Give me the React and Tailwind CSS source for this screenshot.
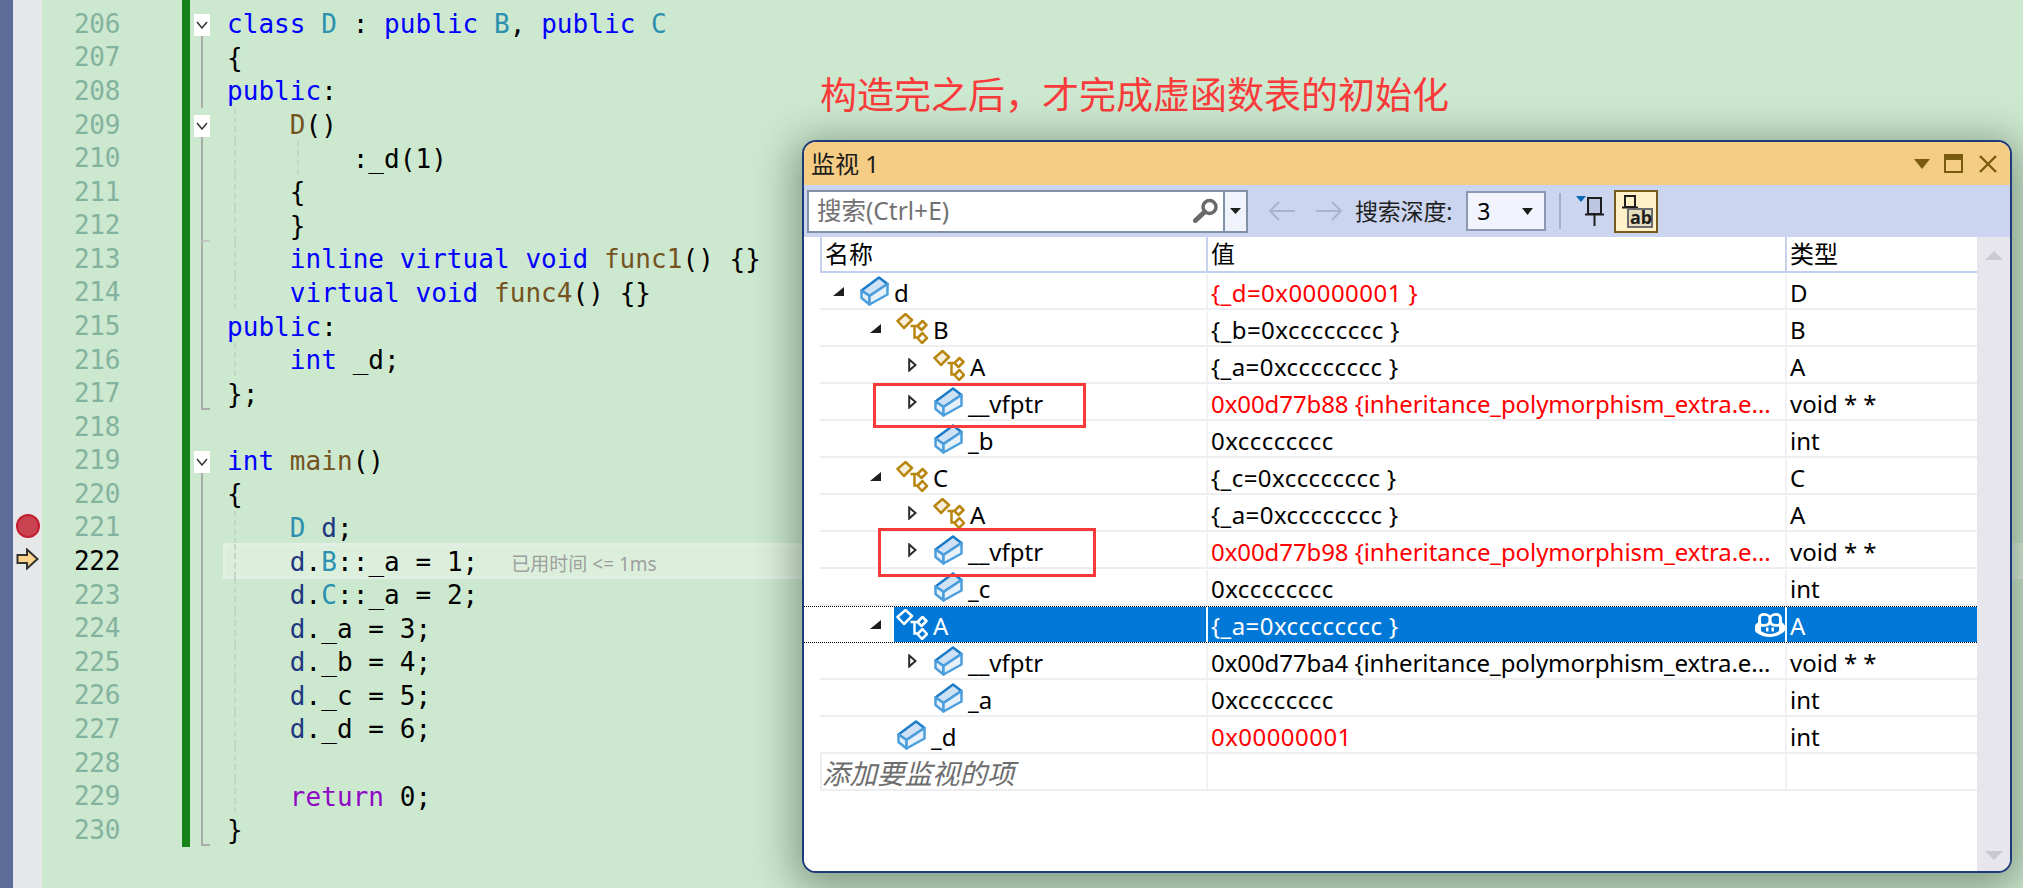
const sans = "font-['Noto_Sans','Noto_Sans_CJK_SC',sans-serif]";

// editor source, one entry per line: [text, colour] pieces
const K = "text-[#0000ff]";
const T = "text-[#2b91af]";
const F = "text-[#74531f]";
const V = "text-[#1f377f]";
const P = "text-[#8f08c4]";
const N = "text-black";

const code = [
  { n: 206, fold: "box", parts: [["class ", K], ["D", T], [" : ", N], ["public ", K], ["B", T], [", ", N], ["public ", K], ["C", T]] },
  { n: 207, fold: "line", parts: [["{", N]] },
  { n: 208, fold: "line", parts: [["public", K], [":", N]] },
  { n: 209, fold: "box", guide: true, parts: [["    ", N], ["D", F], ["()", N]] },
  { n: 210, fold: "line", guide: true, guide2: true, parts: [["        :", N], ["_d", N], ["(1)", N]] },
  { n: 211, fold: "line", guide: true, parts: [["    {", N]] },
  { n: 212, fold: "end", guide: true, parts: [["    }", N]] },
  { n: 213, fold: "line", guide: true, parts: [["    ", N], ["inline virtual void ", K], ["func1", F], ["() {}", N]] },
  { n: 214, fold: "line", guide: true, parts: [["    ", N], ["virtual void ", K], ["func4", F], ["() {}", N]] },
  { n: 215, fold: "line", parts: [["public", K], [":", N]] },
  { n: 216, fold: "line", guide: true, parts: [["    ", N], ["int ", K], ["_d;", N]] },
  { n: 217, fold: "last", parts: [["};", N]] },
  { n: 218, parts: [] },
  { n: 219, fold: "box", parts: [["int ", K], ["main", F], ["()", N]] },
  { n: 220, fold: "line", parts: [["{", N]] },
  { n: 221, fold: "line", guide: true, parts: [["    ", N], ["D ", T], ["d", V], [";", N]] },
  { n: 222, fold: "line", guide: true, current: true, parts: [["    ", N], ["d", V], [".", N], ["B", T], ["::_a = 1;", N]] },
  { n: 223, fold: "line", guide: true, parts: [["    ", N], ["d", V], [".", N], ["C", T], ["::_a = 2;", N]] },
  { n: 224, fold: "line", guide: true, parts: [["    ", N], ["d", V], ["._a = 3;", N]] },
  { n: 225, fold: "line", guide: true, parts: [["    ", N], ["d", V], ["._b = 4;", N]] },
  { n: 226, fold: "line", guide: true, parts: [["    ", N], ["d", V], ["._c = 5;", N]] },
  { n: 227, fold: "line", guide: true, parts: [["    ", N], ["d", V], ["._d = 6;", N]] },
  { n: 228, fold: "line", guide: true, parts: [] },
  { n: 229, fold: "line", guide: true, parts: [["    ", N], ["return ", P], ["0;", N]] },
  { n: 230, fold: "last", parts: [["}", N]] },
];

// watch window rows
const watch = [
  { level: 0, arrow: "open", icon: "cube", name: "d", value: "{_d=0x00000001 }", red: true, type: "D" },
  { level: 1, arrow: "open", icon: "class", name: "B", value: "{_b=0xcccccccc }", type: "B" },
  { level: 2, arrow: "closed", icon: "class", name: "A", value: "{_a=0xcccccccc }", type: "A" },
  { level: 2, arrow: "closed", icon: "cube", name: "__vfptr", value: "0x00d77b88 {inheritance_polymorphism_extra.e...", long: true, red: true, type: "void * *" },
  { level: 2, icon: "cube", name: "_b", value: "0xcccccccc", type: "int" },
  { level: 1, arrow: "open", icon: "class", name: "C", value: "{_c=0xcccccccc }", type: "C" },
  { level: 2, arrow: "closed", icon: "class", name: "A", value: "{_a=0xcccccccc }", type: "A" },
  { level: 2, arrow: "closed", icon: "cube", name: "__vfptr", value: "0x00d77b98 {inheritance_polymorphism_extra.e...", long: true, red: true, type: "void * *" },
  { level: 2, icon: "cube", name: "_c", value: "0xcccccccc", type: "int" },
  { level: 1, arrow: "open", icon: "class", name: "A", value: "{_a=0xcccccccc }", type: "A", selected: true },
  { level: 2, arrow: "closed", icon: "cube", name: "__vfptr", value: "0x00d77ba4 {inheritance_polymorphism_extra.e...", long: true, type: "void * *" },
  { level: 2, icon: "cube", name: "_a", value: "0xcccccccc", type: "int" },
  { level: 1, icon: "cube", name: "_d", value: "0x00000001", red: true, type: "int" },
];

const levelPad = ["pl-[13px]", "pl-[50px]", "pl-[87px]"];

const CubeIcon = () => (
  <svg width="29" height="30" viewBox="0 0 29 30" className="shrink-0">
    <path d="M1.500 14.500 19 1.500l8.500 6.500L9.500 20z" fill="#cfe2f5" stroke="#1a7cc9" strokeWidth="2.500" strokeLinejoin="round" />
    <path d="M1.500 14.500 9.500 20v8.500l-8-6.500z" fill="#e6f1fa" stroke="#4c9fdc" strokeWidth="2.500" strokeLinejoin="round" />
    <path d="M9.500 20 27.500 8v10.500l-18 10z" fill="#e6f1fa" stroke="#4c9fdc" strokeWidth="2.500" strokeLinejoin="round" />
  </svg>
);

const ClassIcon = ({ selected }) => {
  const stroke = selected ? "#ffffff" : "#b9860f";
  const fill = selected ? "#0078d7" : "#f6efdc";
  return (
    <svg width="32" height="31" viewBox="0 0 31 31" fill="none" className="shrink-0 -ml-[1px]">
      <path d="M14 13H21M18 13V24.5H21" stroke={stroke} strokeWidth="2.500" />
      <path d="M1 8 9 1l6.500 6-8 8z" fill={fill} stroke={stroke} strokeWidth="2.500" strokeLinejoin="round" />
      <path d="M21 13l5-5 4 4-5 5z" fill={selected ? fill : "#fff"} stroke={stroke} strokeWidth="2.500" strokeLinejoin="round" />
      <path d="M21 25l5-5 4.500 5-5 5z" fill={selected ? fill : "#fff"} stroke={stroke} strokeWidth="2.500" strokeLinejoin="round" />
    </svg>
  );
};

const Arrow = ({ kind }) => {
  if (kind === "open")
    return (
      <svg width="11" height="9" viewBox="0 0 11 9">
        <path d="M0 9 11 0V9z" fill="#1e1e1e" />
      </svg>
    );
  if (kind === "closed")
    return (
      <svg width="9" height="14" viewBox="0 0 9 14" className="ml-[1px]">
        <path d="M1.200 1.500 7.500 7 1.200 12.500z" fill="#fff" stroke="#2b2b2b" strokeWidth="2" />
      </svg>
    );
  return null;
};

const CopilotIcon = () => (
  <svg width="30" height="26" viewBox="0 0 30 26" className="shrink-0">
    <path fillRule="evenodd" fill="#fff" d="M9 1c2.6 0 4.7.9 6 2.6C16.300 1.900 18.400 1 21 1c4 0 6 2.200 6 6v3.500c1.600.9 3 2.200 3 4v3c0 1.300-.8 2.200-2 3-3.500 2.800-8.200 4.500-13 4.500S5.500 23.800 2 21c-1.200-.8-2-1.700-2-3v-3.500c0-1.800 1.400-3.100 3-4V7c0-3.800 2-6 6-6zM6 6v4.500c0 1 .8 1.500 3 1.500 3 0 4.500-1 4.500-3.500V6.500C13.500 4.800 12 3.800 9.500 3.800 7 3.800 6 4.500 6 6zm18 0c0-1.500-1-2.200-3.500-2.200-2.500 0-4 1-4 2.700v2C16.500 11 18 12 21 12c2.200 0 3-.5 3-1.500zM15 12.500c-1 1.300-3 2.300-6 2.300-1 0-2-.1-3-.4V19c2.700 1.800 6 3 9 3s6.300-1.200 9-3v-4.600c-1 .3-2 .4-3 .4-3 0-5-1-6-2.300z" />
    <path fill="#fff" d="M11 15.500h2.500v4H11zM16.500 15.500H19v4h-2.500z" />
  </svg>
);

const WatchRow = ({ row }) => {
  const rowBg = row.selected
    ? "pl-[16px] text-white border-y border-dotted border-y-black"
    : "ml-[16px] pt-[1px] border-b-2 border-[#eeeef1]";
  return (
    <div className={`h-[37px] flex items-center text-[24px] ${rowBg}`}>
      <div className={`w-[386px] h-full flex items-center relative ${levelPad[row.level]}`}>
        {row.selected && <div className="absolute left-[74px] right-0 inset-y-0 bg-[#0078d7]" />}
        <div className="w-[27px] h-4 flex items-center relative">
          <Arrow kind={row.arrow} />
        </div>
        <div className="relative flex items-center gap-[5px]">
          {row.icon === "cube" ? <CubeIcon /> : <ClassIcon selected={row.selected} />}
          <span className={`pt-[3px] ${row.selected ? "text-white" : "text-black"}`}>{row.name}</span>
        </div>
      </div>
      <div className={`w-[579px] h-full flex items-center justify-between pl-[3px] border-l-2 whitespace-nowrap ${row.selected ? "bg-[#0078d7] border-[#f3f8fd]" : "border-[#f2f2f4]"} ${row.red ? "text-[#ff0000]" : row.selected ? "text-white" : "text-black"}`}>
        <span className={`pt-[3px] ${row.long ? "tracking-[-0.08px]" : "tracking-[0.45px]"}`}>{row.value}</span>
        {row.selected && <CopilotIcon />}
      </div>
      <div className={`flex-1 h-full flex items-center pl-[3px] border-l-2 ${row.selected ? "bg-[#0078d7] border-[#f3f8fd] text-white" : "border-[#f2f2f4] text-black"}`}>
        <span className="pt-[3px]">{row.type}</span>
      </div>
    </div>
  );
};

const FoldCell = ({ kind }) => {
  if (kind === "box")
    return (
      <div className="h-[33.58px] relative">
        <div className="absolute left-[4px] top-[7px] w-4 h-[22px] bg-white flex items-center justify-center">
          <svg width="12" height="8" viewBox="0 0 12 8" fill="none">
            <path d="M1 1l5 6 5-6" stroke="#333" strokeWidth="1.500" />
          </svg>
        </div>
        <div className="absolute left-[11px] top-[29px] bottom-0 w-[2px] bg-[#a9aca9]" />
      </div>
    );
  if (kind === "line") return <div className="h-[33.58px] ml-[11px] w-[2px] bg-[#a9aca9]" />;
  if (kind === "end")
    return <div className="h-[33.58px] ml-[11px] w-[9px] border-l-2 border-b-2 border-[#a9aca9] [border-bottom-color:#c4c8c4]" />;
  if (kind === "last") return <div className="h-[33.58px] ml-[11px] w-[9px] border-l-2 border-b-2 border-[#a9aca9]" />;
  return <div className="h-[33.58px]" />;
};

const CodeLine = ({ line }) => (
  <div className="h-[33.58px] relative flex items-center pl-[4px] whitespace-pre">
    {line.current && (
      <div className="absolute left-0 right-0 -top-px -bottom-px bg-[#dcefdd] border-y-[3px] border-l-[3px] border-[#e3efe5]" />
    )}
    {line.guide && <div className="absolute left-[11px] inset-y-0 border-l-2 border-dashed border-[#c2d8c6]" />}
    {line.guide2 && <div className="absolute left-[74px] inset-y-0 border-l-2 border-dashed border-[#c2d8c6]" />}
    <span className="relative top-[1px] tracking-[0.05px]">
      {line.parts.map(([text, color], i) => (
        <span key={i} className={color}>{text}</span>
      ))}
    </span>
    {line.current && (
      <span className={`relative top-[3px] ml-[33px] text-[19px] text-[#9c9f9c] ${sans}`}>已用时间 &lt;= 1ms</span>
    )}
  </div>
);

const App = () => (
  <div className="w-[2023px] h-[888px] relative overflow-hidden flex bg-[#cce8cf] font-['DejaVu_Sans_Mono',monospace] text-[26px]">
    <div className="w-[13px] bg-[#5d6b99]" />

    {/* glyph margin */}
    <div className="w-[29px] bg-[#e6e7e8] pt-[7px]">
      {code.map((line) => (
        <div key={line.n} className="h-[33.58px] flex items-center justify-center">
          {line.n === 221 && <div className="w-6 h-6 rounded-full bg-[#c8434f] border-2 border-[#c41c30] shrink-0 -translate-y-[1px]" />}
          {line.n === 222 && (
            <svg width="23" height="22" viewBox="0 0 23 22" className="shrink-0 -translate-y-[2px]">
              <path d="M1.500 7H11V1.500L21.500 11 11 20.500V15H1.500z" fill="#fbd38a" stroke="#333" strokeWidth="2" />
            </svg>
          )}
        </div>
      ))}
    </div>

    {/* line numbers */}
    <div className="w-[140px] pl-[32px] pt-[7px]">
      {code.map((line) => (
        <div key={line.n} className={`h-[33.58px] flex items-center tracking-[-0.3px] pt-[1px] ${line.current ? "text-black" : "text-[#83b39e]"}`}>
          {line.n}
        </div>
      ))}
    </div>

    {/* changed-lines bar */}
    <div className="w-2 h-[847px] bg-[#178217]" />

    <div className="w-[33px] pt-[7px]">
      {code.map((line) => (
        <FoldCell key={line.n} kind={line.fold} />
      ))}
    </div>

    <div className="flex-1 pt-[7px]">
      {code.map((line) => (
        <CodeLine key={line.n} line={line} />
      ))}
    </div>

    {/* annotation pasted over the editor */}
    <div className="absolute left-[820px] top-[71px] text-[37px] leading-[44px] text-[#f93b3b] font-['Noto_Sans_CJK_SC',sans-serif]">
      构造完之后，才完成虚函数表的初始化
    </div>

    {/* floating watch window */}
    <div className={`absolute left-[802px] top-[140px] w-[1210px] h-[733px] rounded-[14px] border-2 border-[#1f3a7a] bg-white overflow-hidden flex flex-col shadow-[0_8px_40px_8px_rgba(30,50,30,0.42)] ${sans}`}>
      <div className="h-[43px] shrink-0 bg-[#f4cc84] flex items-center pl-[7px] pr-[12px] text-[24px] text-[#1c1c1c]">
        <span className="flex-1">监视 1</span>
        <svg width="16" height="10" viewBox="0 0 16 10" className="mr-[14px]">
          <path d="M0 0h16L8 10z" fill="#7a5a10" />
        </svg>
        <div className="w-[19px] h-[19px] border-2 border-t-[6px] border-[#7a5a10] mr-[15px]" />
        <svg width="20" height="20" viewBox="0 0 20 20" fill="none">
          <path d="M2 2l16 16M18 2 2 18" stroke="#7a5a10" strokeWidth="2.400" />
        </svg>
      </div>

      {/* toolbar */}
      <div className="h-[52px] shrink-0 bg-[#ccd5f0] flex items-center pl-[3px]">
        <div className="w-[441px] h-[43px] border-2 border-[#8391a8] bg-white flex items-center">
          <span className="flex-1 pl-[8px] text-[24.5px] text-[#727272]">搜索(Ctrl+E)</span>
          <svg width="26" height="26" viewBox="0 0 26 26" fill="none" className="mr-[4px]">
            <circle cx="16.500" cy="9" r="6.500" stroke="#6a6a6a" strokeWidth="3.500" />
            <path d="M11.500 14 2.500 22.500" stroke="#6a6a6a" strokeWidth="5" strokeLinecap="round" />
          </svg>
          <div className="w-[23px] h-full border-l-2 border-[#8391a8] bg-[#f0f3fb] flex items-center justify-center">
            <svg width="11" height="6" viewBox="0 0 11 6">
              <path d="M0 0h11L5.500 6z" fill="#1e1e1e" />
            </svg>
          </div>
        </div>
        <svg width="28" height="22" viewBox="0 0 28 22" fill="none" className="ml-[20px]">
          <path d="M27 11H2M11 2 2 11l9 9" stroke="#a9b3cb" strokeWidth="2" />
        </svg>
        <svg width="28" height="22" viewBox="0 0 28 22" fill="none" className="ml-[19px]">
          <path d="M1 11h25M17 2l9 9-9 9" stroke="#a9b3cb" strokeWidth="2" />
        </svg>
        <span className="ml-[12px] text-[23px] text-[#1e1e1e] tracking-[-0.2px]">搜索深度:</span>
        <div className="ml-[14px] w-[80px] h-[40px] border-2 border-[#8d99b2] bg-[#f1f4fc] flex items-center pl-[9px] pr-[11px] text-[23px] text-black">
          <span className="flex-1">3</span>
          <svg width="11" height="7" viewBox="0 0 11 7">
            <path d="M0 0h11L5.500 7z" fill="#1e1e1e" />
          </svg>
        </div>
        <div className="ml-[13px] w-[2px] h-[36px] bg-[#a3afcc]" />
        <svg width="28" height="32" viewBox="0 0 28 32" fill="none" className="ml-[15px]">
          <path d="M0 1h10L5 7z" fill="#0e66b8" />
          <path d="M12 3h13v16H12z" fill="#bcc6e0" stroke="#1e1e1e" strokeWidth="2" />
          <path d="M9 19.500h19M18.500 20v11" stroke="#1e1e1e" strokeWidth="2" />
        </svg>
        <div className="ml-[10px] w-[44px] h-[43px] border-2 border-[#7a5c1a] bg-[#fff0c8] flex items-center justify-center">
          <svg width="34" height="35" viewBox="0 0 34 35" fill="none">
            <path d="M6 2h10v11H6z" fill="#fff0c8" stroke="#1e1e1e" strokeWidth="2" />
            <path d="M3 13.500h16M11 14v9" stroke="#1e1e1e" strokeWidth="2" />
            <path d="M9 15h24v18H9z" fill="#e6dcbf" stroke="#6b6b6b" strokeWidth="2" />
            <text x="11" y="30" fontSize="18" fontWeight="700" fill="#1e1e1e" fontFamily="Noto Sans">ab</text>
          </svg>
        </div>
      </div>

      {/* tree grid + scrollbar */}
      <div className="flex-1 flex min-h-0">
        <div className="flex-1 bg-white min-w-0">
          <div className="h-[36px] ml-[16px] flex border-b-2 border-[#c0cff0] text-[24px] text-black">
            <div className="w-[386px] pl-[3px] border-l-2 border-[#c6d2ee] flex items-center">名称</div>
            <div className="w-[579px] pl-[3px] border-l-2 border-[#c6d2ee] flex items-center">值</div>
            <div className="flex-1 pl-[3px] border-l-2 border-[#c6d2ee] flex items-center">类型</div>
          </div>
          {watch.map((row, i) => (
            <WatchRow key={i} row={row} />
          ))}
          <div className="h-[37px] ml-[16px] flex border-b-2 border-[#eeeef1]">
            <div className="w-[386px] pl-0 pt-[5px] border-l-2 border-[#eeeef1] flex items-center text-[27.500px] italic text-[#6d6d6d]">添加要监视的项</div>
            <div className="w-[579px] border-l-2 border-[#f2f2f4]" />
            <div className="flex-1 border-l-2 border-[#f2f2f4]" />
          </div>
        </div>
        <div className="w-[33px] bg-[#e6e6ec] flex flex-col items-center justify-between pt-[14px] pb-[11px]">
          <svg width="18" height="9" viewBox="0 0 18 9">
            <path d="M9 0l9 9H0z" fill="#c9c9d3" />
          </svg>
          <svg width="18" height="9" viewBox="0 0 18 9">
            <path d="M0 0h18L9 9z" fill="#c9c9d3" />
          </svg>
        </div>
      </div>
    </div>

    {/* red marks pasted over the window */}
    <div className="absolute left-[873px] top-[383px] w-[213px] h-[45px] border-[3px] border-[#f83a3a]" />
    <div className="absolute left-[878px] top-[528px] w-[218px] h-[49px] border-[3px] border-[#f83a3a]" />
  </div>
);

export default App;
